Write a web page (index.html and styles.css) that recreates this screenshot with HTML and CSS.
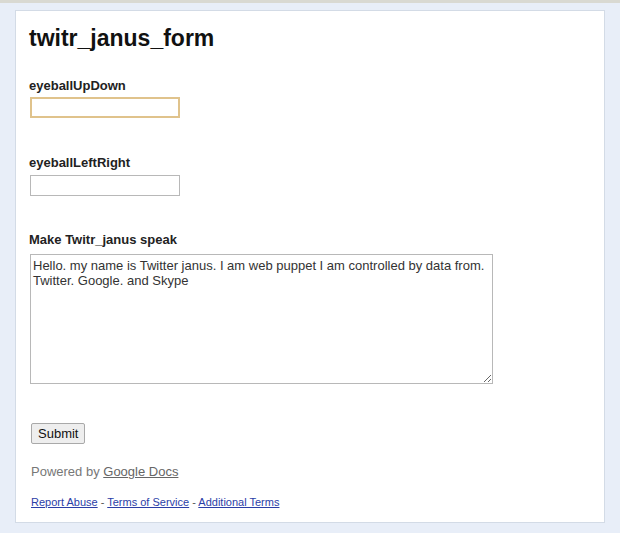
FILE: index.html
```html
<!DOCTYPE html>
<html lang="en">
<head>
    <meta charset="UTF-8">
    <title>twitr_janus_form</title>
    <link rel="stylesheet" href="styles.css">
</head>
<body>
    <div class="topbar"></div>
    <div class="page">
        <div class="card">
            <h1 class="form-title">twitr_janus_form</h1>
            <form class="ss-form">
                <div class="item item-first">
                    <label class="item-label" for="ud">eyeballUpDown</label>
                    <input type="text" id="ud" class="text-input focused">
                </div>
                <div class="item item-second">
                    <label class="item-label" for="lr">eyeballLeftRight</label>
                    <input type="text" id="lr" class="text-input">
                </div>
                <div class="item item-speak">
                    <label class="item-label" for="speak">Make Twitr_janus speak</label>
                    <textarea id="speak" class="text-area">Hello. my name is Twitter janus. I am web puppet I am controlled by data from. Twitter. Google. and Skype</textarea>
                </div>
                <div class="submit-row">
                    <button type="button" class="submit">Submit</button>
                </div>
            </form>
            <p class="powered">Powered by <a href="#">Google Docs</a></p>
            <p class="footer-links"><a href="#">Report Abuse</a> - <a href="#">Terms of Service</a> - <a href="#">Additional Terms</a></p>
        </div>
    </div>
</body>
</html>
```

FILE: styles.css
```css
body {
    margin: 0;
    padding: 0;
    background: #e8eef8;
    font-family: Arial, "Liberation Sans", sans-serif;
    color: #000;
    height: 533px;
    overflow: hidden;
}
.topbar {
    height: 3px;
    background: #d9d9d2;
}
.page {
    padding: 7px 15px 10px 15px;
}
.card {
    background: #ffffff;
    border: 1px solid #d3dbe6;
    height: 513px;
    box-sizing: border-box;
    padding: 13px 13px 0 13px;
}
.form-title {
    font-size: 23px;
    font-weight: bold;
    margin: 0;
    line-height: 28px;
    color: #111;
}
.ss-form {
    margin-top: 26px;
}
.item-label {
    display: block;
    font-size: 13px;
    font-weight: bold;
    line-height: 15px;
    color: #222;
    margin-bottom: 4px;
}
.item-first {
    margin-bottom: 37px;
}
.item-second {
    margin-bottom: 36px;
}
.item-second .item-label {
    margin-bottom: 5px;
}
.item-speak .item-label {
    margin-bottom: 7px;
}
.text-input {
    display: block;
    margin-left: 1px;
    width: 150px;
    height: 21px;
    box-sizing: border-box;
    border: 1px solid #b8b8b8;
    font-size: 13px;
    font-family: Arial, "Liberation Sans", sans-serif;
    padding: 2px 3px;
    outline: none;
}
.text-input.focused {
    border: 2px solid #e0c38c;
}
.text-area {
    display: block;
    margin-left: 1px;
    width: 463px;
    height: 130px;
    box-sizing: border-box;
    border: 1px solid #b8b8b8;
    font-size: 13px;
    line-height: 15px;
    font-family: Arial, "Liberation Sans", sans-serif;
    color: #333;
    padding: 3px 2px;
    resize: both;
}
.submit-row {
    margin-top: 39px;
}
.submit {
    display: block;
    margin-left: 2px;
    font-family: Arial, "Liberation Sans", sans-serif;
    font-size: 13px;
    color: #111;
    background: #eeeeee;
    border: 1px solid #a9a9a9;
    border-radius: 2px;
    padding: 1px 6px;
    height: 21px;
}
.powered {
    margin: 20px 0 0 2px;
    font-size: 13px;
    line-height: 15px;
    color: #777;
}
.powered a {
    color: #666;
}
.footer-links {
    margin: 17px 0 0 2px;
    font-size: 11px;
    line-height: 13px;
    color: #555;
}
.footer-links a {
    color: #2b3ea7;
}
```
